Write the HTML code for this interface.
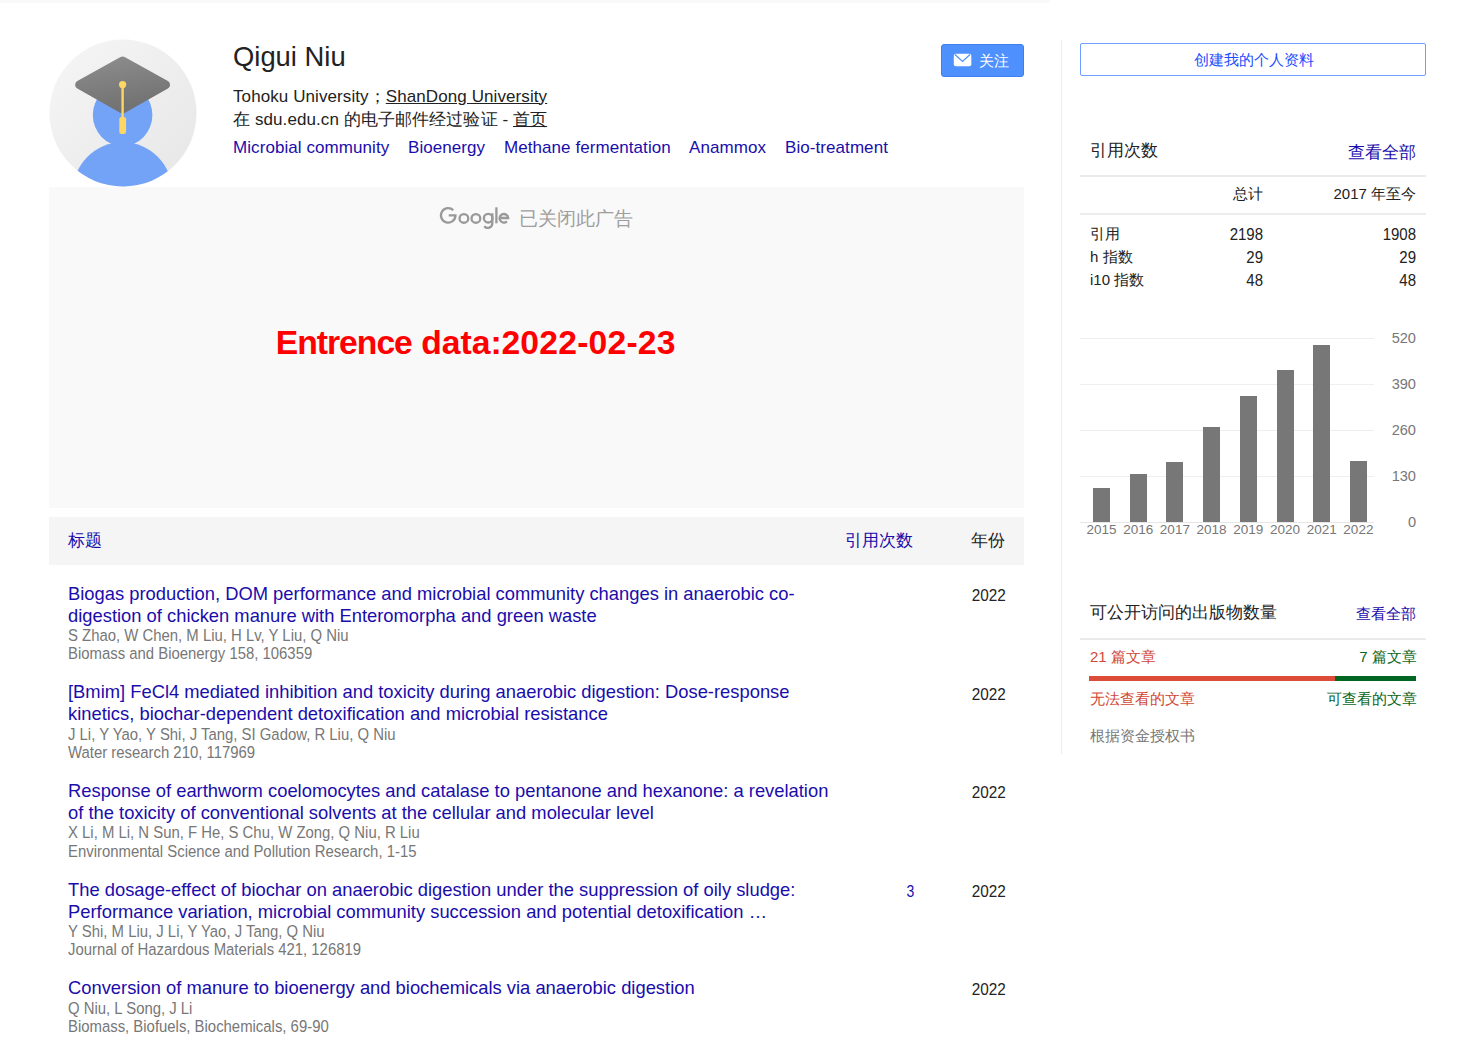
<!DOCTYPE html>
<html><head><meta charset="utf-8">
<style>
html,body{margin:0;padding:0;background:#fff;width:1476px;height:1042px;overflow:hidden;position:relative;font-family:"Liberation Sans",sans-serif;color:#222;}
.a{position:absolute;white-space:nowrap;}
.lk{color:#1a0dab;}
.gr{color:#777;}
.sy{transform:scaleY(1.13);transform-origin:0 12.53px;}
.r{text-align:right;}
</style></head><body>
<!-- top strip -->
<div class="a" style="left:0;top:0;width:1050px;height:3px;background:#f9f9f9"></div>

<!-- avatar -->
<svg class="a" style="left:49px;top:39px" width="148" height="148" viewBox="0 0 148 148">
  <defs>
    <linearGradient id="bg" x1="0" y1="0" x2="1" y2="1"><stop offset="0" stop-color="#f6f6f6"/><stop offset="1" stop-color="#e6e6e6"/></linearGradient>
    <linearGradient id="capg" x1="0" y1="0" x2="0.3" y2="1"><stop offset="0" stop-color="#8c8c8c"/><stop offset="1" stop-color="#737373"/></linearGradient>
    <clipPath id="cc"><circle cx="74" cy="74" r="73.5"/></clipPath>
  </defs>
  <circle cx="74" cy="74" r="73.5" fill="url(#bg)"/>
  <g clip-path="url(#cc)">
    <ellipse cx="73.6" cy="76" rx="29.8" ry="31" fill="#73a3f7"/>
    <ellipse cx="73.6" cy="154" rx="50" ry="51" fill="#73a3f7"/>
  </g>
  <path d="M73.6 21.8 L116.8 45.8 L73.6 70.2 L30.4 45.8 Z" fill="url(#capg)" stroke="url(#capg)" stroke-width="8.5" stroke-linejoin="round"/>
  <circle cx="73.6" cy="45.6" r="3.6" fill="#fdd663"/>
  <rect x="72.4" y="46" width="2.4" height="36" fill="#fdd663"/>
  <rect x="70.3" y="78" width="6.8" height="17" rx="2.2" fill="#fdd663"/>
</svg>

<!-- name & info -->
<div class="a" style="left:233px;top:43px;font-size:27.4px;line-height:27.4px">Qigui Niu</div>
<div class="a" style="left:233px;top:87.5px;font-size:17px;letter-spacing:0.09px;line-height:17px">Tohoku University；<span style="text-decoration:underline">ShanDong University</span></div>
<div class="a" style="left:233px;top:111px;font-size:17px;letter-spacing:0.09px;line-height:17px">在 sdu.edu.cn 的电子邮件经过验证 - <span style="text-decoration:underline">首页</span></div>
<div class="a lk" style="left:233px;top:139px;font-size:17px;line-height:17px;letter-spacing:0.07px">Microbial community</div>
<div class="a lk" style="left:408px;top:139px;font-size:17px;line-height:17px;letter-spacing:0.07px">Bioenergy</div>
<div class="a lk" style="left:504px;top:139px;font-size:17px;line-height:17px;letter-spacing:0.07px">Methane fermentation</div>
<div class="a lk" style="left:689px;top:139px;font-size:17px;line-height:17px;letter-spacing:0.07px">Anammox</div>
<div class="a lk" style="left:785px;top:139px;font-size:17px;line-height:17px;letter-spacing:0.07px">Bio-treatment</div>

<!-- follow button -->
<div class="a" style="left:941px;top:44px;width:81px;height:31px;background:#4d90fe;border:1px solid #3d7ff0;border-radius:3px"></div>
<svg class="a" style="left:953px;top:53px" width="20" height="15" viewBox="0 0 20 15">
  <rect x="0.8" y="0.8" width="17.5" height="12.5" rx="2" fill="#fff"/>
  <path d="M2 1.5 L9.5 8.5 L17 1.5" fill="none" stroke="#4d90fe" stroke-width="1.2"/>
</svg>
<div class="a" style="left:979px;top:53px;font-size:15px;line-height:15px;color:#fff">关注</div>

<!-- ad box -->
<div class="a" style="left:49px;top:187px;width:975px;height:321px;background:#f9f9f9"></div>
<svg class="a" style="left:436px;top:200px" width="80" height="32" viewBox="436 200 80 32" fill="none" stroke="#999999" stroke-width="2.3">
  <path d="M453.3 210.2 A7.25 7.25 0 1 0 455.45 215.4 L448.7 215.4"/>
  <circle cx="463.9" cy="218.4" r="4.35"/>
  <circle cx="475.9" cy="218.4" r="4.35"/>
  <circle cx="488.2" cy="218.2" r="4.3"/>
  <path d="M492.3 213.2 L492.3 223.5 A4.5 4.5 0 0 1 484.3 226.2"/>
  <path d="M496.4 207.3 L496.4 223.3"/>
  <path d="M499.9 218.0 L508.2 218.0 A4.3 4.3 0 1 0 506.9 221.4"/>
</svg>
<div class="a" style="left:518.5px;top:209px;font-size:19px;line-height:19px;color:#9e9e9e">已关闭此广告</div>
<div class="a" style="left:275.7px;top:325.5px;font-size:33.7px;line-height:33.7px;font-weight:bold;color:#f00;letter-spacing:-1px">Entrence</div>
<div class="a" style="left:421.2px;top:325.5px;font-size:33.7px;line-height:33.7px;font-weight:bold;color:#f00">data<span>:</span></div>
<div class="a" style="left:501.4px;top:325.5px;font-size:33.7px;line-height:33.7px;font-weight:bold;color:#f00;letter-spacing:0.2px">2022-02-23</div>

<!-- table header -->
<div class="a" style="left:49px;top:517px;width:975px;height:48px;background:#f5f5f5"></div>
<div class="a lk" style="left:67.5px;top:532px;font-size:17px;line-height:17px">标题</div>
<div class="a lk" style="left:845px;top:532px;font-size:17px;line-height:17px">引用次数</div>
<div class="a" style="left:971px;top:532px;font-size:17px;line-height:17px">年份</div>

<div id="pubs">
<div class="a lk" style="left:68px;top:584.86px;font-size:18.36px;line-height:18.36px">Biogas production, DOM performance and microbial community changes in anaerobic co-</div>
<div class="a lk" style="left:68px;top:606.86px;font-size:18.36px;line-height:18.36px">digestion of chicken manure with Enteromorpha and green waste</div>
<div class="a gr sy" style="left:68px;top:629.17px;font-size:14.9px;line-height:14.8px">S Zhao, W Chen, M Liu, H Lv, Y Liu, Q Niu</div>
<div class="a gr sy" style="left:68px;top:647.37px;font-size:14.9px;line-height:14.8px">Biomass and Bioenergy 158, 106359</div>
<div class="a r" style="left:940px;width:65.7px;top:587.95px;font-size:15.3px;line-height:15.3px;transform:scaleY(1.12);transform-origin:0 12.95px">2022</div>
<div class="a lk" style="left:68px;top:683.48px;font-size:18.36px;line-height:18.36px">[Bmim] FeCl4 mediated inhibition and toxicity during anaerobic digestion: Dose-response</div>
<div class="a lk" style="left:68px;top:705.48px;font-size:18.36px;line-height:18.36px">kinetics, biochar-dependent detoxification and microbial resistance</div>
<div class="a gr sy" style="left:68px;top:727.79px;font-size:14.9px;line-height:14.8px">J Li, Y Yao, Y Shi, J Tang, SI Gadow, R Liu, Q Niu</div>
<div class="a gr sy" style="left:68px;top:745.99px;font-size:14.9px;line-height:14.8px">Water research 210, 117969</div>
<div class="a r" style="left:940px;width:65.7px;top:686.57px;font-size:15.3px;line-height:15.3px;transform:scaleY(1.12);transform-origin:0 12.95px">2022</div>
<div class="a lk" style="left:68px;top:782.10px;font-size:18.36px;line-height:18.36px">Response of earthworm coelomocytes and catalase to pentanone and hexanone: a revelation</div>
<div class="a lk" style="left:68px;top:804.10px;font-size:18.36px;line-height:18.36px">of the toxicity of conventional solvents at the cellular and molecular level</div>
<div class="a gr sy" style="left:68px;top:826.41px;font-size:14.9px;line-height:14.8px">X Li, M Li, N Sun, F He, S Chu, W Zong, Q Niu, R Liu</div>
<div class="a gr sy" style="left:68px;top:844.61px;font-size:14.9px;line-height:14.8px">Environmental Science and Pollution Research, 1-15</div>
<div class="a r" style="left:940px;width:65.7px;top:785.19px;font-size:15.3px;line-height:15.3px;transform:scaleY(1.12);transform-origin:0 12.95px">2022</div>
<div class="a lk" style="left:68px;top:880.72px;font-size:18.36px;line-height:18.36px">The dosage-effect of biochar on anaerobic digestion under the suppression of oily sludge:</div>
<div class="a lk" style="left:68px;top:902.72px;font-size:18.36px;line-height:18.36px">Performance variation, microbial community succession and potential detoxification …</div>
<div class="a gr sy" style="left:68px;top:925.03px;font-size:14.9px;line-height:14.8px">Y Shi, M Liu, J Li, Y Yao, J Tang, Q Niu</div>
<div class="a gr sy" style="left:68px;top:943.23px;font-size:14.9px;line-height:14.8px">Journal of Hazardous Materials 421, 126819</div>
<div class="a lk r" style="left:850px;width:64.3px;top:884.91px;font-size:14px;line-height:14px;transform:scaleY(1.12);transform-origin:0 11.85px">3</div>
<div class="a r" style="left:940px;width:65.7px;top:883.81px;font-size:15.3px;line-height:15.3px;transform:scaleY(1.12);transform-origin:0 12.95px">2022</div>
<div class="a lk" style="left:68px;top:979.34px;font-size:18.36px;line-height:18.36px">Conversion of manure to bioenergy and biochemicals via anaerobic digestion</div>
<div class="a gr sy" style="left:68px;top:1001.65px;font-size:14.9px;line-height:14.8px">Q Niu, L Song, J Li</div>
<div class="a gr sy" style="left:68px;top:1019.85px;font-size:14.9px;line-height:14.8px">Biomass, Biofuels, Biochemicals, 69-90</div>
<div class="a r" style="left:940px;width:65.7px;top:982.43px;font-size:15.3px;line-height:15.3px;transform:scaleY(1.12);transform-origin:0 12.95px">2022</div>
</div>

<!-- divider -->
<div class="a" style="left:1061px;top:40px;width:1px;height:714px;background:#ececec"></div>

<!-- create profile -->
<div class="a" style="left:1080px;top:43px;width:344px;height:31px;border:1px solid #6d9eff;border-radius:2px"></div>
<div class="a" style="left:1193.5px;top:52px;font-size:15px;line-height:15px;color:#1a4dff">创建我的个人资料</div>

<div id="side">
<div class="a " style="left:1090px;top:141.6px;font-size:17px;line-height:17px;">引用次数</div>
<div class="a r lk" style="left:1116px;width:300px;top:143.6px;font-size:17px;line-height:17px;">查看全部</div>
<div class="a" style="left:1080px;top:175px;width:346px;height:2px;background:#eaeaea"></div>
<div class="a r " style="left:963px;width:300px;top:186px;font-size:15px;line-height:15px;">总计</div>
<div class="a r " style="left:1116px;width:300px;top:186px;font-size:15px;line-height:15px;">2017 年至今</div>
<div class="a" style="left:1080px;top:213px;width:346px;height:2px;background:#ededed"></div>
<div class="a " style="left:1090px;top:225.9px;font-size:15px;line-height:15px;">引用</div>
<div class="a r " style="left:963px;width:300px;top:226.9px;font-size:15px;line-height:15px;transform:scaleY(1.14);transform-origin:0 12.7px">2198</div>
<div class="a r " style="left:1116px;width:300px;top:226.9px;font-size:15px;line-height:15px;transform:scaleY(1.14);transform-origin:0 12.7px">1908</div>
<div class="a " style="left:1090px;top:248.7px;font-size:15px;line-height:15px;">h 指数</div>
<div class="a r " style="left:963px;width:300px;top:249.7px;font-size:15px;line-height:15px;transform:scaleY(1.14);transform-origin:0 12.7px">29</div>
<div class="a r " style="left:1116px;width:300px;top:249.7px;font-size:15px;line-height:15px;transform:scaleY(1.14);transform-origin:0 12.7px">29</div>
<div class="a " style="left:1090px;top:271.5px;font-size:15px;line-height:15px;">i10 指数</div>
<div class="a r " style="left:963px;width:300px;top:272.5px;font-size:15px;line-height:15px;transform:scaleY(1.14);transform-origin:0 12.7px">48</div>
<div class="a r " style="left:1116px;width:300px;top:272.5px;font-size:15px;line-height:15px;transform:scaleY(1.14);transform-origin:0 12.7px">48</div>
<div class="a" style="left:1080px;top:338px;width:294px;height:1px;background:#eeeeee"></div>
<div class="a" style="left:1080px;top:384px;width:294px;height:1px;background:#eeeeee"></div>
<div class="a" style="left:1080px;top:430px;width:294px;height:1px;background:#eeeeee"></div>
<div class="a" style="left:1080px;top:476px;width:294px;height:1px;background:#eeeeee"></div>
<div class="a" style="left:1080px;top:522px;width:294px;height:1px;background:#e6e6e6"></div>
<div class="a" style="left:1093.0px;top:488.0px;width:17px;height:34.0px;background:#777"></div>
<div class="a" style="left:1076.5px;width:50px;text-align:center;top:523.1px;font-size:13.5px;line-height:13.5px;color:#777">2015</div>
<div class="a" style="left:1129.7px;top:474.3px;width:17px;height:47.7px;background:#777"></div>
<div class="a" style="left:1113.2px;width:50px;text-align:center;top:523.1px;font-size:13.5px;line-height:13.5px;color:#777">2016</div>
<div class="a" style="left:1166.4px;top:461.8px;width:17px;height:60.2px;background:#777"></div>
<div class="a" style="left:1149.9px;width:50px;text-align:center;top:523.1px;font-size:13.5px;line-height:13.5px;color:#777">2017</div>
<div class="a" style="left:1203.1px;top:427.3px;width:17px;height:94.7px;background:#777"></div>
<div class="a" style="left:1186.6px;width:50px;text-align:center;top:523.1px;font-size:13.5px;line-height:13.5px;color:#777">2018</div>
<div class="a" style="left:1239.8px;top:395.5px;width:17px;height:126.5px;background:#777"></div>
<div class="a" style="left:1223.3px;width:50px;text-align:center;top:523.1px;font-size:13.5px;line-height:13.5px;color:#777">2019</div>
<div class="a" style="left:1276.5px;top:370.1px;width:17px;height:151.9px;background:#777"></div>
<div class="a" style="left:1260.0px;width:50px;text-align:center;top:523.1px;font-size:13.5px;line-height:13.5px;color:#777">2020</div>
<div class="a" style="left:1313.2px;top:344.8px;width:17px;height:177.2px;background:#777"></div>
<div class="a" style="left:1296.7px;width:50px;text-align:center;top:523.1px;font-size:13.5px;line-height:13.5px;color:#777">2021</div>
<div class="a" style="left:1349.9px;top:460.7px;width:17px;height:61.3px;background:#777"></div>
<div class="a" style="left:1333.4px;width:50px;text-align:center;top:523.1px;font-size:13.5px;line-height:13.5px;color:#777">2022</div>
<div class="a r gr" style="left:1116px;width:300px;top:330.8px;font-size:14.6px;line-height:14.6px;">520</div>
<div class="a r gr" style="left:1116px;width:300px;top:376.8px;font-size:14.6px;line-height:14.6px;">390</div>
<div class="a r gr" style="left:1116px;width:300px;top:422.8px;font-size:14.6px;line-height:14.6px;">260</div>
<div class="a r gr" style="left:1116px;width:300px;top:468.8px;font-size:14.6px;line-height:14.6px;">130</div>
<div class="a r gr" style="left:1116px;width:300px;top:514.8px;font-size:14.6px;line-height:14.6px;">0</div>
<div class="a " style="left:1090px;top:604.1px;font-size:17px;line-height:17px;">可公开访问的出版物数量</div>
<div class="a r lk" style="left:1116px;width:300px;top:605.8px;font-size:15px;line-height:15px;">查看全部</div>
<div class="a" style="left:1080px;top:638px;width:346px;height:2px;background:#eaeaea"></div>
<div class="a " style="left:1090px;top:649.0px;font-size:15px;line-height:15px;color:#d14836">21 篇文章</div>
<div class="a r" style="left:1116.7px;width:300px;top:649.0px;font-size:15px;line-height:15px;color:#0b6623">7 篇文章</div>
<div class="a" style="left:1089px;top:676px;width:246px;height:5px;background:#dd4b39"></div>
<div class="a" style="left:1335px;top:676px;width:81px;height:5px;background:#006621"></div>
<div class="a " style="left:1090px;top:690.5px;font-size:15px;line-height:15px;color:#d14836">无法查看的文章</div>
<div class="a r" style="left:1116.7px;width:300px;top:690.5px;font-size:15px;line-height:15px;color:#0b6623">可查看的文章</div>
<div class="a gr" style="left:1090px;top:727.5px;font-size:15px;line-height:15px;">根据资金授权书</div>
</div>
</body></html>
